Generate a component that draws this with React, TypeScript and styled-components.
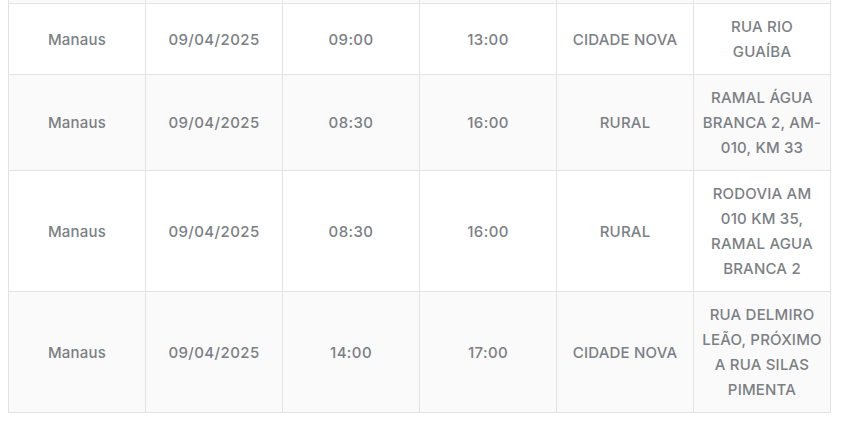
import React from "react";
import styled, { createGlobalStyle } from "styled-components";

type Row = {
  city: string;
  date: string;
  start: string;
  end: string;
  district: string;
  street: string[];
};

const rows: Row[] = [
  {
    city: "Manaus",
    date: "09/04/2025",
    start: "09:00",
    end: "13:00",
    district: "CIDADE NOVA",
    street: ["RUA RIO", "GUAÍBA"],
  },
  {
    city: "Manaus",
    date: "09/04/2025",
    start: "08:30",
    end: "16:00",
    district: "RURAL",
    street: ["RAMAL ÁGUA", "BRANCA 2, AM-", "010, KM 33"],
  },
  {
    city: "Manaus",
    date: "09/04/2025",
    start: "08:30",
    end: "16:00",
    district: "RURAL",
    street: ["RODOVIA AM", "010 KM 35,", "RAMAL AGUA", "BRANCA 2"],
  },
  {
    city: "Manaus",
    date: "09/04/2025",
    start: "14:00",
    end: "17:00",
    district: "CIDADE NOVA",
    street: ["RUA DELMIRO", "LEÃO, PRÓXIMO", "A RUA SILAS", "PIMENTA"],
  },
];

export default function App() {
  return (
    <>
      <GlobalStyle />
      <Page>
        <Table>
          <colgroup>
            {Array.from({ length: 6 }).map((_, i) => (
              <col key={i} style={{ width: 137 }} />
            ))}
          </colgroup>
          <tbody>
            <TailRow>
              {Array.from({ length: 6 }).map((_, i) => (
                <TailCell key={i} />
              ))}
            </TailRow>
            {rows.map((r, i) => (
              <BodyRow key={i} $striped={i % 2 === 1}>
                <Cell>{r.city}</Cell>
                <Cell $spacing={0.4}>{r.date}</Cell>
                <Cell $spacing={0.4}>{r.start}</Cell>
                <Cell $spacing={0.4}>{r.end}</Cell>
                <Cell>{r.district}</Cell>
                <Cell>
                  {r.street.map((line, j) => (
                    <React.Fragment key={j}>
                      {j > 0 && <br />}
                      {line}
                    </React.Fragment>
                  ))}
                </Cell>
              </BodyRow>
            ))}
          </tbody>
        </Table>
      </Page>
    </>
  );
}

const GlobalStyle = createGlobalStyle`
  html, body {
    margin: 0;
    padding: 0;
    background: #ffffff;
  }
  body {
    font-family: Inter, "Open Sans", sans-serif;
  }
`;

const Page = styled.div`
  padding: 0 8px;
`;

const Table = styled.table`
  width: 823px;
  table-layout: fixed;
  border-collapse: collapse;
  font-family: Inter, "Open Sans", sans-serif;
`;

const TailRow = styled.tr`
  background: #fafafa;
`;

const TailCell = styled.td`
  height: 3px;
  padding: 0;
  border: 1px solid #e3e3e3;
  border-top: none;
`;

const BodyRow = styled.tr<{ $striped: boolean }>`
  background: ${(p) => (p.$striped ? "#fafafa" : "#ffffff")};
`;

const Cell = styled.td<{ $spacing?: number }>`
  border: 1px solid #e3e3e3;
  padding: 10px 6px;
  text-align: center;
  vertical-align: middle;
  color: #7c7f84;
  font-size: 15px;
  font-weight: 500;
  line-height: 25px;
  letter-spacing: ${(p) => p.$spacing ?? 0.2}px;
`;
